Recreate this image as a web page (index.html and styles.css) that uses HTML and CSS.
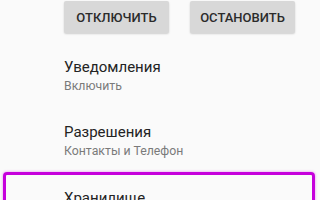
FILE: index.html
```html
<!DOCTYPE html>
<html lang="ru">
<head>
<meta charset="utf-8">
<link rel="stylesheet" href="styles.css">
</head>
<body>
<div class="actions">
  <div class="btn">ОТКЛЮЧИТЬ</div>
  <div class="btn">ОСТАНОВИТЬ</div>
</div>
<div class="item">
  <div class="title">Уведомления</div>
  <div class="sub">Включить</div>
</div>
<div class="item">
  <div class="title">Разрешения</div>
  <div class="sub">Контакты и Телефон</div>
</div>
<div class="item item-hl">
  <div class="title">Хранилище</div>
</div>
</body>
</html>
```
FILE: styles.css
```css
html, body {
  margin: 0;
  padding: 0;
  background: #fafafa;
  font-family: Roboto, "Noto Sans", sans-serif;
  overflow: hidden;
  height: 200px;
}
.actions {
  display: flex;
  gap: 21px;
  padding: 1px 0 0 64px;
  height: 39px;
}
.btn {
  width: 105px;
  height: 32px;
  background: #d8d8d8;
  box-shadow: 0 1px 2px rgba(0, 0, 0, 0.18);
  border-radius: 2px;
  display: flex;
  align-items: center;
  justify-content: center;
  font-size: 13px;
  font-weight: 500;
  color: #2b2b2b;
}
.item {
  height: 65px;
  box-sizing: border-box;
  padding: 17px 0 0 64px;
}
.title {
  font-size: 15px;
  line-height: 20px;
  color: #232323;
}
.sub {
  font-size: 12.3px;
  line-height: 17px;
  margin-top: 1px;
  color: #7a7a7a;
}
.item-hl {
  margin: 2px 5px 0 3px;
  padding: 13px 0 0 58px;
  border: 3px solid #c600dc;
  border-radius: 4px;
  box-shadow: 0 0 3px rgba(200, 0, 220, 0.45);
}
```
